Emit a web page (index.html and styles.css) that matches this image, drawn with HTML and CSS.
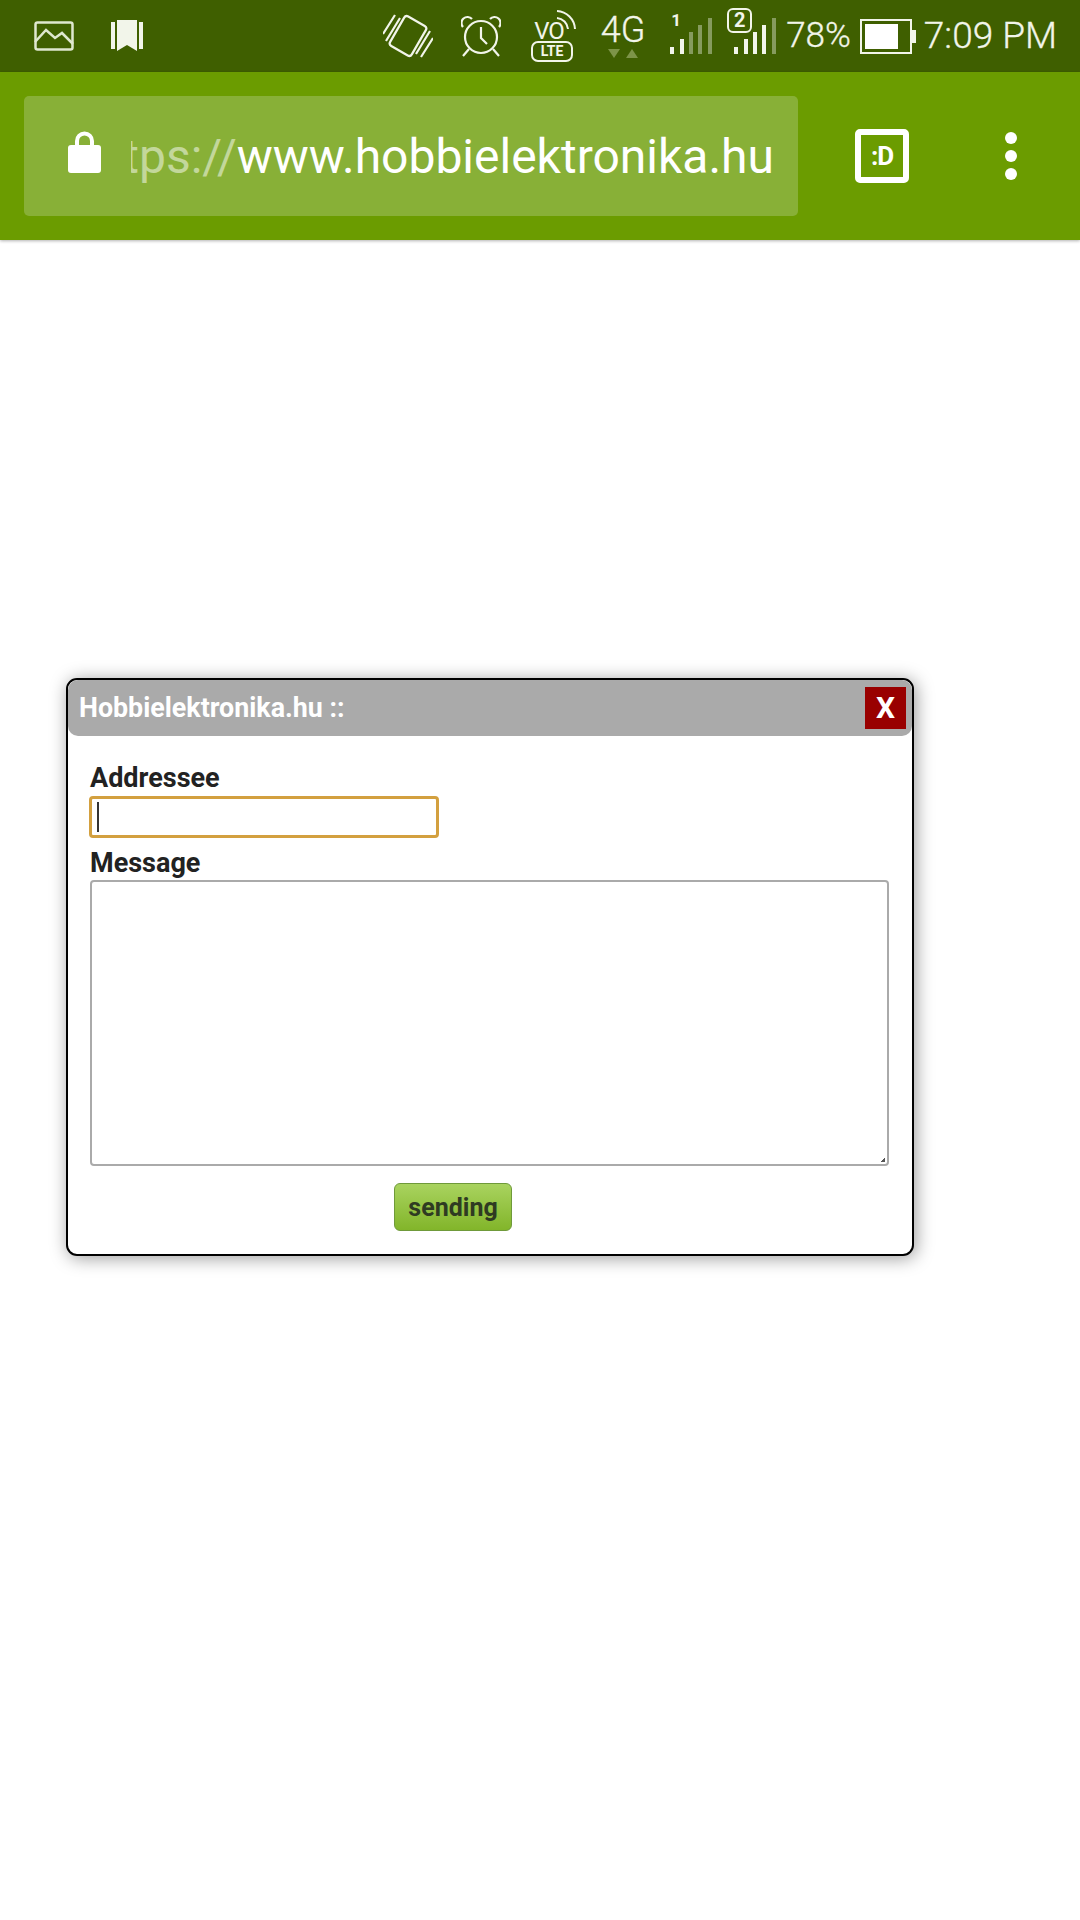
FILE: index.html
```html
<!DOCTYPE html>
<html lang="en">
<head>
    <meta charset="UTF-8">
    <meta name="viewport" content="width=device-width, initial-scale=1.0">
    <title>Hobbielektronika.hu</title>
    <link rel="stylesheet" href="styles.css">
</head>
<body>
    <div class="status-bar">
        <div class="status-left">
            <svg class="icon-picture" width="40" height="30" viewBox="0 0 40 30" fill="none" stroke="#dfe8cf" stroke-width="2.500">
                <rect x="1.500" y="1.500" width="37" height="27" rx="2"/>
                <path d="M1 21 L12 9 L21 17 L28 12 L39 23"/>
            </svg>
            <svg class="icon-books" width="32" height="32" viewBox="0 0 32 32" fill="#f2f5ea">
                <path d="M0 2 H4 V29 H0 Z M28 2 H32 V29 H28 Z M6 0 H26 V31 L16 25 L6 31 Z"/>
            </svg>
        </div>
        <div class="status-right">
            <svg class="icon-vibrate" width="50" height="44" viewBox="0 0 50 44" fill="none" stroke="#f2f5ea" stroke-width="2.200">
                <rect x="12.500" y="5" width="25" height="34" rx="3" transform="rotate(30 25 22)"/>
                <path d="M0 20 L12 1 M3 27 L17 4 M33 40 L47 17 M38 43 L50 24"/>
            </svg>
            <svg class="icon-alarm" width="40" height="44" viewBox="0 0 40 44" fill="none" stroke="#f2f5ea" stroke-width="2.200">
                <circle cx="20" cy="23" r="16"/>
                <path d="M20 13 V24 L26 30 M2 13 A6 6 0 0 1 11 5 M29 5 A6 6 0 0 1 38 13 M8 35 L2 42 M32 35 L38 42"/>
            </svg>
            <div class="volte">
                <svg class="volte-waves" width="22" height="22" viewBox="0 0 22 22" fill="none" stroke="#f2f5ea" stroke-width="2">
                    <path d="M2 2 A19 19 0 0 1 20 20 M2 9 A12 12 0 0 1 13 20"/>
                </svg>
                <span class="volte-vo">VO</span>
                <span class="volte-lte">LTE</span>
            </div>
            <div class="network">
                <span class="network-label">4G</span>
                <div class="network-arrows">
                    <span class="arrow-down"></span>
                    <span class="arrow-up"></span>
                </div>
            </div>
            <div class="signal signal-one">
                <span class="sim-one">1</span>
                <svg width="42" height="36" viewBox="0 0 42 36" fill="#f2f5ea">
                    <rect x="0" y="29" width="4" height="7"/>
                    <rect x="10" y="21" width="4" height="15"/>
                    <rect x="19" y="14" width="4" height="22" fill-opacity="0.4"/>
                    <rect x="28" y="7" width="4" height="29" fill-opacity="0.4"/>
                    <rect x="38" y="0" width="4" height="36" fill-opacity="0.4"/>
                </svg>
            </div>
            <div class="signal signal-two">
                <span class="sim-two">2</span>
                <svg width="42" height="36" viewBox="0 0 42 36" fill="#f2f5ea">
                    <rect x="0" y="29" width="4" height="7"/>
                    <rect x="10" y="21" width="4" height="15"/>
                    <rect x="19" y="14" width="4" height="22"/>
                    <rect x="28" y="7" width="4" height="29"/>
                    <rect x="38" y="0" width="4" height="36" fill-opacity="0.4"/>
                </svg>
            </div>
            <span class="battery-text">78%</span>
            <div class="battery">
                <div class="battery-body"><div class="battery-level" style="width: 78%"></div></div>
                <div class="battery-tip"></div>
            </div>
            <span class="clock">7:09 PM</span>
        </div>
    </div>

    <div class="toolbar">
        <div class="url-bar">
            <svg class="icon-lock" width="33" height="43" viewBox="0 0 33 43" fill="#fff">
                <path d="M7 16 V11 A9.500 9.500 0 0 1 26 11 V16 H22 V11 A5.500 5.500 0 0 0 11 11 V16 Z"/>
                <rect x="0" y="15" width="33" height="28" rx="3"/>
            </svg>
            <div class="url-text"><span class="url-scheme">https://</span>www.hobbielektronika.hu</div>
        </div>
        <div class="tab-button">:D</div>
        <div class="menu-button">
            <span class="menu-dot"></span>
            <span class="menu-dot"></span>
            <span class="menu-dot"></span>
        </div>
    </div>

    <div class="page">
        <div class="dialog">
            <div class="dialog-title">
                <span>Hobbielektronika.hu ::</span>
                <div class="close-button">X</div>
            </div>
            <form class="dialog-body">
                <label class="field-label" for="addressee">Addressee</label>
                <div class="input-wrap">
                    <input class="addressee" id="addressee" type="text">
                    <span class="caret"></span>
                </div>
                <label class="field-label" for="message">Message</label>
                <div class="message-wrap">
                    <textarea class="message" id="message"></textarea>
                    <span class="resize-grip"></span>
                </div>
                <div class="form-actions">
                    <button class="send-button" type="button">sending</button>
                </div>
            </form>
        </div>
    </div>
</body>
</html>
```

FILE: styles.css
```css
* {
    box-sizing: border-box;
}

body {
    margin: 0;
    height: 1920px;
    overflow: hidden;
    background-color: white;
    font-family: 'Roboto', sans-serif;
}

.status-bar {
    display: flex;
    justify-content: space-between;
    align-items: flex-start;
    height: 72px;
    background-color: #3f5f00;
    color: #f2f5ea;
}

.status-left {
    display: flex;
    align-items: center;
    padding: 20px 0 0 34px;
}

.icon-books {
    margin-left: 37px;
}

.status-right {
    display: flex;
    align-items: flex-start;
    padding-right: 23px;
}

.icon-vibrate {
    margin-top: 14px;
}

.icon-alarm {
    margin: 14px 0 0 28px;
}

.volte {
    position: relative;
    width: 46px;
    height: 53px;
    margin: 9px 0 0 30px;
}

.volte-waves {
    position: absolute;
    top: 0;
    right: 0;
}

.volte-vo {
    position: absolute;
    left: 3px;
    top: 10px;
    font-size: 24px;
    line-height: 24px;
    letter-spacing: -1px;
}

.volte-lte {
    position: absolute;
    left: 0;
    bottom: 0;
    width: 42px;
    height: 21px;
    border: 2px solid #f2f5ea;
    border-radius: 7px;
    font-size: 14px;
    line-height: 17px;
    font-weight: 700;
    text-align: center;
}

.network {
    display: flex;
    flex-direction: column;
    align-items: center;
    width: 46px;
    margin: 12px 0 0 23px;
}

.network-label {
    font-size: 36px;
    line-height: 37px;
    font-weight: 300;
    -webkit-text-stroke: 0.3px #f2f5ea;
}

.network-arrows {
    display: flex;
    gap: 6px;
}

.arrow-down {
    border-left: 6px solid transparent;
    border-right: 6px solid transparent;
    border-top: 9px solid #7d9448;
}

.arrow-up {
    border-left: 6px solid transparent;
    border-right: 6px solid transparent;
    border-bottom: 9px solid #7d9448;
}

.signal {
    position: relative;
    width: 42px;
    height: 36px;
    margin-top: 18px;
}

.signal svg {
    display: block;
}

.signal-one {
    margin-left: 24px;
}

.signal-two {
    margin-left: 22px;
}

.sim-one {
    position: absolute;
    left: 1px;
    top: -7px;
    font-size: 17px;
    line-height: 18px;
    font-weight: 700;
}

.sim-two {
    position: absolute;
    left: -7px;
    top: -10px;
    width: 25px;
    height: 25px;
    border: 2px solid #f2f5ea;
    border-radius: 6px;
    background-color: #3f5f00;
    font-size: 20px;
    line-height: 21px;
    font-weight: 700;
    text-align: center;
}

.battery-text {
    margin-left: 10px;
    font-size: 35px;
    line-height: 72px;
    font-weight: 300;
    -webkit-text-stroke: 0.3px #f2f5ea;
}

.battery {
    display: flex;
    align-items: center;
    margin: 19px 0 0 9px;
}

.battery-body {
    width: 52px;
    height: 35px;
    border: 2px solid #f2f5ea;
    padding: 3px;
}

.battery-level {
    height: 100%;
    background-color: white;
}

.battery-tip {
    width: 4px;
    height: 13px;
    background-color: #f2f5ea;
}

.clock {
    margin-left: 8px;
    font-size: 37px;
    line-height: 72px;
    font-weight: 300;
    -webkit-text-stroke: 0.3px #f2f5ea;
}

.toolbar {
    display: flex;
    align-items: center;
    height: 168px;
    padding-left: 24px;
    background-color: #6b9c00;
    box-shadow: 0 1px 3px rgba(0, 0, 0, 0.3);
}

.url-bar {
    display: flex;
    align-items: center;
    width: 774px;
    height: 120px;
    padding: 0 24px 0 44px;
    border-radius: 5px;
    background-color: #88b037;
}

.icon-lock {
    margin-bottom: 10px;
}

.url-text {
    flex: 1;
    display: flex;
    justify-content: flex-end;
    margin-left: 30px;
    overflow: hidden;
    white-space: nowrap;
    color: white;
    font-size: 48px;
}

.url-scheme {
    color: rgba(255, 255, 255, 0.5);
}

.tab-button {
    width: 54px;
    height: 54px;
    margin-left: 57px;
    border: 6px solid white;
    border-radius: 5px;
    color: white;
    font-size: 26px;
    line-height: 42px;
    font-weight: 700;
    letter-spacing: -1px;
    text-align: center;
}

.menu-button {
    display: flex;
    flex-direction: column;
    gap: 6px;
    margin-left: 96px;
}

.menu-dot {
    width: 12px;
    height: 12px;
    border-radius: 50%;
    background-color: white;
}

.page {
    padding: 438px 0 0 66px;
}

.dialog {
    width: 848px;
    height: 578px;
    border: 2px solid black;
    border-radius: 11px;
    background-color: white;
    box-shadow: 2px 2px 18px rgba(0, 0, 0, 0.4);
}

.dialog-title {
    display: flex;
    justify-content: space-between;
    align-items: center;
    height: 56px;
    padding: 0 6px 0 11px;
    border-radius: 10px;
    background-color: #aaaaaa;
    color: white;
    font-size: 26.800px;
    font-weight: 700;
}

.close-button {
    width: 41px;
    height: 42px;
    background-color: #990000;
    font-size: 30px;
    line-height: 42px;
    text-align: center;
}

.dialog-body {
    display: flex;
    flex-direction: column;
    align-items: flex-start;
    padding: 26px 21px 0;
}

.field-label {
    margin-left: 1px;
    color: #222222;
    font-size: 27px;
    line-height: 33px;
    font-weight: 700;
}

.input-wrap {
    position: relative;
    margin: 1px 0 9px;
}

.addressee {
    display: block;
    width: 350px;
    height: 42px;
    border: 3px solid #d3a03f;
    border-radius: 4px;
    outline: none;
    background-color: white;
}

.caret {
    position: absolute;
    left: 8px;
    top: 6px;
    width: 2px;
    height: 30px;
    background-color: #333333;
}

.message-wrap {
    position: relative;
    margin-left: 1px;
}

.message {
    display: block;
    width: 799px;
    height: 286px;
    border: 2px solid #aaaaaa;
    border-radius: 4px;
    outline: none;
    resize: none;
}

.resize-grip {
    position: absolute;
    right: 4px;
    bottom: 4px;
    width: 4px;
    height: 4px;
    background: linear-gradient(135deg, transparent 40%, #555555 40%);
}

.form-actions {
    display: flex;
    justify-content: center;
    width: 800px;
    margin-top: 17px;
    padding-right: 72px;
}

.send-button {
    width: 118px;
    height: 48px;
    padding: 0;
    border: 1px solid #6f9a3a;
    border-radius: 6px;
    background: linear-gradient(#a9d35f, #82b52a);
    color: #2f3b22;
    font-family: 'Roboto', sans-serif;
    font-size: 25px;
    font-weight: 700;
}
```
